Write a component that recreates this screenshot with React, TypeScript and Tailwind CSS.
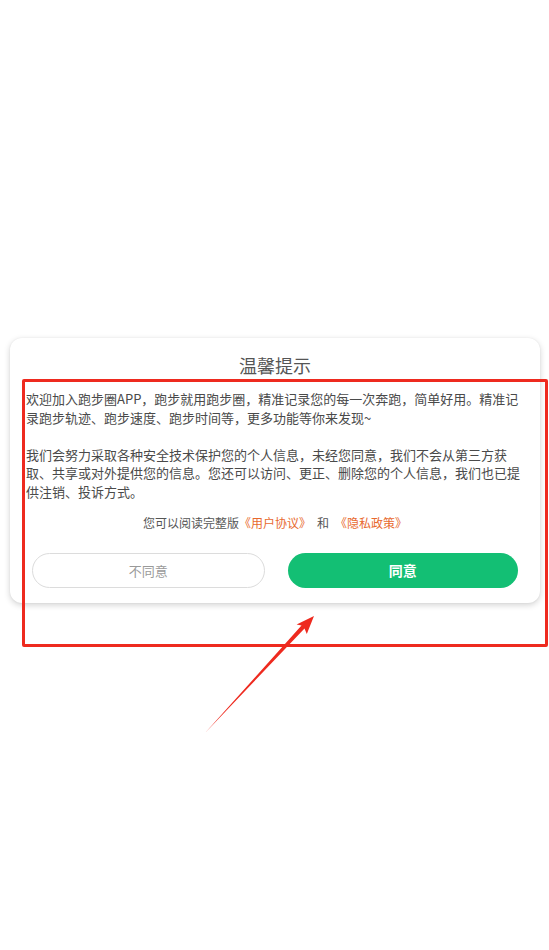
import React from "react";

const FONT = { fontFamily: '"Noto Sans CJK SC", "Noto Sans", sans-serif' };

function Arrow() {
  // red hand-drawn style annotation arrow pointing up-right
  return (
    <svg className="pointer-events-none absolute left-0 top-0" width="549" height="950" viewBox="0 0 549 950">
      <polygon
        points="205,733 301.5,625.6 296.6,624.4 314,616 306.8,634 304.5,628.4"
        fill="#ee2a1f"
      />
    </svg>
  );
}

export default function App() {
  return (
    <div className="relative h-[950px] w-[549px] overflow-hidden bg-white" style={FONT}>
      <div className="pt-[338px]">
        {/* dialog card */}
        <div className="ml-[10px] w-[530px] rounded-[12px] bg-white px-4 pb-[15px] pt-[14px] shadow-[0_2px_6px_rgba(0,0,0,0.18),0_0_2px_rgba(0,0,0,0.06)]">
          <h2 className="text-center text-[18px] font-normal leading-[26px] text-[#555]">温馨提示</h2>
          <div className="mt-[12px] text-[13px] leading-[18.5px] text-[#4a4a4a]">
            <p>欢迎加入跑步圈APP，跑步就用跑步圈，精准记录您的每一次奔跑，简单好用。精准记录跑步轨迹、跑步速度、跑步时间等，更多功能等你来发现~</p>
            <p className="mt-[18.5px]">我们会努力采取各种安全技术保护您的个人信息，未经您同意，我们不会从第三方获取、共享或对外提供您的信息。您还可以访问、更正、删除您的个人信息，我们也已提供注销、投诉方式。</p>
          </div>
          <p className="mt-[13px] text-center text-[12px] leading-[18px] text-[#555]">
            您可以阅读完整版<span className="text-[#e8692e]">《用户协议》</span>
            <span className="mx-[6px]">和</span>
            <span className="text-[#e8692e]">《隐私政策》</span>
          </p>
          <div className="mt-[21px] flex gap-[23px] px-[6px]">
            <button className="flex h-[35px] flex-1 items-center justify-center rounded-full border border-[#dcdcdc] bg-white text-[13px] text-[#9a9a9a]">
              不同意
            </button>
            <button className="flex h-[35px] flex-1 items-center justify-center rounded-full bg-[#13bf74] text-[14px] font-bold text-white">
              同意
            </button>
          </div>
        </div>
      </div>

      {/* annotation overlay */}
      <div className="pointer-events-none absolute left-[22px] top-[379px] h-[268px] w-[526px] rounded-[2px] border-[3px] border-[#ee2a1f]" />
      <Arrow />
    </div>
  );
}
